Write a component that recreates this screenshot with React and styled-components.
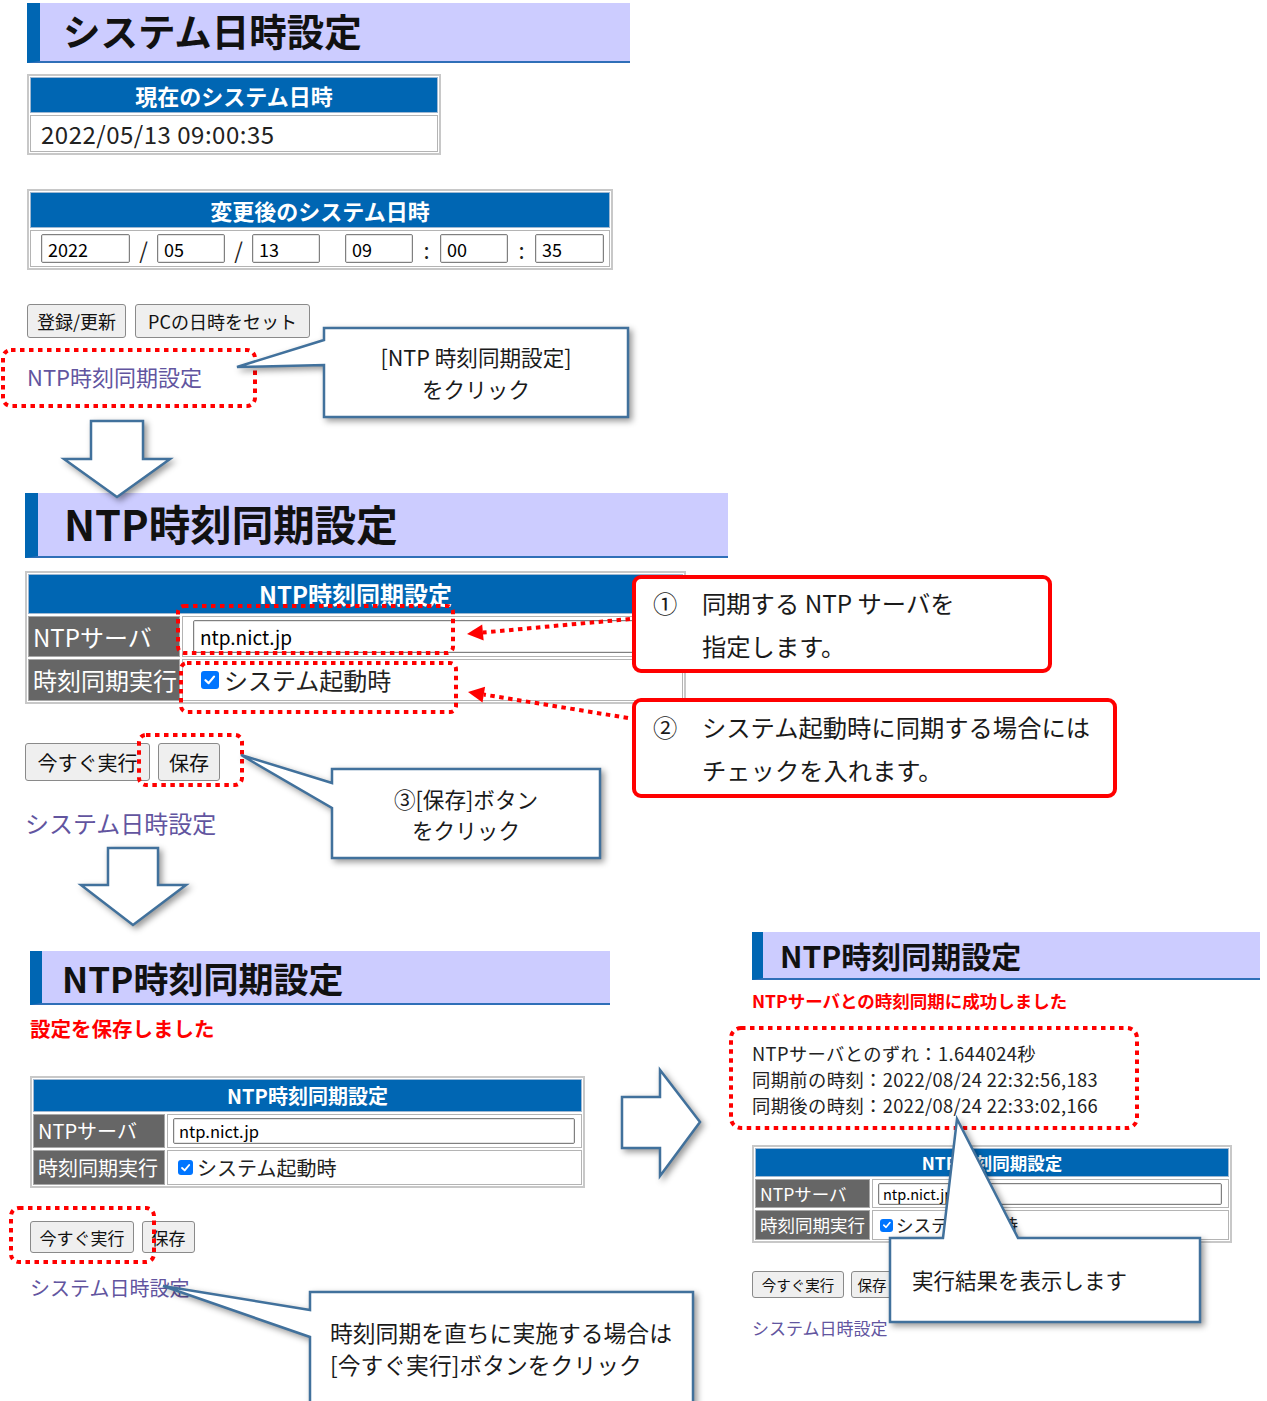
import React from 'react';
import styled, { createGlobalStyle } from 'styled-components';

const FONT = `"Noto Sans CJK JP", "Noto Sans", sans-serif`;
const BLUE = '#0066b3';
const LINE = '#41719c';
const LINK = '#62559f';
const RED = '#ff0000';

const GlobalStyle = createGlobalStyle`
  *, *::before, *::after { box-sizing: border-box; }
  html, body { margin: 0; padding: 0; background: #fff; }
  body { font-family: ${FONT}; }
`;

const Canvas = styled.div`
  position: relative;
  width: 1267px;
  height: 1401px;
  overflow: hidden;
  background: #fff;
  font-family: ${FONT};
  color: #000;
`;

// 貼り付けたスクリーンショット1枚分
const Shot = styled.div`
  position: absolute;
  left: ${(p) => p.$x}px;
  top: ${(p) => p.$y}px;
  display: flex;
  flex-direction: column;
  align-items: flex-start;
`;

const TitleBar = styled.h1`
  margin: 0;
  width: ${(p) => p.$w}px;
  height: ${(p) => p.$h}px;
  display: flex;
  align-items: center;
  padding-left: ${(p) => p.$pad}px;
  padding-bottom: ${(p) => p.$lift || 0}px;
  background: #ccccff;
  border-left: ${(p) => p.$strip}px solid ${BLUE};
  border-bottom: 2px solid #2f6fb8;
  font-size: ${(p) => p.$fs}px;
  font-weight: 700;
  line-height: 1;
  color: #111;
  white-space: nowrap;
`;

const Message = styled.p`
  margin: ${(p) => p.$mt}px 0 0;
  font-size: ${(p) => p.$fs}px;
  line-height: ${(p) => p.$lh}px;
  font-weight: 700;
  color: ${RED};
  white-space: nowrap;
`;

const Results = styled.div`
  margin-top: ${(p) => p.$mt}px;
  font-size: ${(p) => p.$fs}px;
  line-height: ${(p) => p.$lh}px;
  letter-spacing: 0.4px;
  color: #222;
  white-space: nowrap;
`;

const Table = styled.div`
  width: ${(p) => p.$w}px;
  margin-top: ${(p) => p.$mt}px;
  display: grid;
  grid-template-columns: ${(p) => p.$cols};
  gap: 2px;
  padding: 1px;
  border: 2px solid #c8c8c8;
  background: #fff;
`;

const HeadCell = styled.div`
  grid-column: 1 / -1;
  height: ${(p) => p.$h}px;
  display: flex;
  align-items: center;
  justify-content: center;
  background: ${BLUE};
  border: 1px solid #9fb8d2;
  color: #fff;
  font-size: ${(p) => p.$fs}px;
  font-weight: 700;
  line-height: 1;
  white-space: nowrap;
`;

const LabelCell = styled.div`
  height: ${(p) => p.$h}px;
  display: flex;
  align-items: center;
  padding-left: 4px;
  background: #666666;
  border: 1px solid #a8a8a8;
  color: #fff;
  font-size: ${(p) => p.$fs}px;
  line-height: 1;
  white-space: nowrap;
  overflow: hidden;
`;

const ValueCell = styled.div`
  height: ${(p) => p.$h}px;
  display: flex;
  align-items: center;
  gap: ${(p) => p.$gap || 0}px;
  padding: 0 ${(p) => p.$right || 6}px 0 ${(p) => p.$pad}px;
  border: 1px solid #b4b4b4;
  font-size: ${(p) => p.$fs}px;
  letter-spacing: ${(p) => p.$ls || 0}px;
  line-height: 1;
  color: #222;
  white-space: nowrap;
  overflow: hidden;
`;

const TextInput = styled.input`
  flex: ${(p) => (p.$w ? 'none' : '1')};
  width: ${(p) => (p.$w ? `${p.$w}px` : 'auto')};
  min-width: 0;
  height: ${(p) => p.$h}px;
  padding: 0 ${(p) => p.$px || 5}px;
  border: 1px solid #808080;
  border-radius: 2px;
  box-shadow: inset 0 0 0 1px #e4e4e4;
  background: #fff;
  font-family: ${FONT};
  font-size: ${(p) => p.$fs}px;
  letter-spacing: 0;
  color: #000;
  outline: none;
`;

const Sep = styled.span`
  width: ${(p) => p.$w}px;
  flex: none;
  text-align: center;
  font-size: 22px;
  color: #222;
`;

const Check = styled.span`
  flex: none;
  width: ${(p) => p.$s}px;
  height: ${(p) => p.$s}px;
  border-radius: 3px;
  background: #0075ff;
  display: flex;
  align-items: center;
  justify-content: center;
  margin-left: ${(p) => p.$ml || 0}px;
`;

const ButtonRow = styled.div`
  margin-top: ${(p) => p.$mt}px;
  display: flex;
  gap: ${(p) => p.$gap}px;
`;

const Button = styled.button`
  width: ${(p) => p.$w}px;
  height: ${(p) => p.$h}px;
  padding: 0;
  border: 1px solid #8a8a8a;
  border-radius: 3px;
  background: #efefef;
  font-family: ${FONT};
  font-size: ${(p) => p.$fs}px;
  color: #111;
  white-space: nowrap;
`;

const PageLink = styled.a`
  margin-top: ${(p) => p.$mt}px;
  font-size: ${(p) => p.$fs}px;
  line-height: ${(p) => p.$lh}px;
  color: ${LINK};
  text-decoration: none;
  white-space: nowrap;
`;

// 注釈レイヤー（図形）
const Drawing = styled.svg`
  position: absolute;
  left: 0;
  top: 0;
  width: 1267px;
  height: 1401px;
  overflow: visible;
  pointer-events: none;
  filter: ${(p) => (p.$shadow ? 'drop-shadow(3px 3px 3px rgba(0,0,0,0.4))' : 'none')};
`;

const DotRect = styled.rect`
  fill: none;
  stroke: ${RED};
  stroke-width: 4px;
  stroke-dasharray: 4.5 4.5;
`;

const DotLine = styled.line`
  stroke: ${RED};
  stroke-width: 4px;
  stroke-dasharray: 4.5 4.5;
`;

const Outline = styled.path`
  fill: #fff;
  stroke: ${LINE};
  stroke-width: 2.5px;
  stroke-linejoin: miter;
`;

const CalloutBody = styled.div`
  position: absolute;
  left: ${(p) => p.$x}px;
  top: ${(p) => p.$y}px;
  width: ${(p) => p.$w}px;
  height: ${(p) => p.$h}px;
  display: flex;
  flex-direction: column;
  justify-content: ${(p) => (p.$top ? 'flex-start' : 'center')};
  align-items: ${(p) => (p.$left ? 'flex-start' : 'center')};
  padding: ${(p) => p.$pt || 0}px 0 0 ${(p) => p.$pl || 0}px;
  font-size: ${(p) => p.$fs}px;
  line-height: ${(p) => p.$lh}px;
  color: #1a1a1a;
  white-space: nowrap;
`;

const Note = styled.div`
  position: absolute;
  left: ${(p) => p.$x}px;
  top: ${(p) => p.$y}px;
  width: ${(p) => p.$w}px;
  height: ${(p) => p.$h}px;
  display: grid;
  grid-template-columns: 49px 1fr;
  align-content: start;
  padding: ${(p) => p.$pt}px 0 0 17px;
  border: 4px solid ${RED};
  border-radius: 9px;
  background: #fff;
  font-size: 24.3px;
  line-height: 43px;
  color: #1a1a1a;
  white-space: nowrap;
`;

const Line = styled.span`
  display: block;
`;

function CheckMark({ s }) {
  return (
    <svg width={s * 0.75} height={s * 0.75} viewBox="0 0 12 12">
      <path d="M2.2 6.4 L5 9 L9.8 3.2" fill="none" stroke="#fff" strokeWidth="2" strokeLinecap="round" strokeLinejoin="round" />
    </svg>
  );
}

function RedArrow({ from, to }) {
  const [x1, y1] = from;
  const [x2, y2] = to;
  const len = Math.hypot(x2 - x1, y2 - y1);
  const ux = (x2 - x1) / len;
  const uy = (y2 - y1) / len;
  const bx = x2 - ux * 16;
  const by = y2 - uy * 16;
  const px = -uy;
  const py = ux;
  return (
    <>
      <DotLine x1={x1} y1={y1} x2={bx} y2={by} />
      <polygon points={`${x2},${y2} ${bx + px * 8},${by + py * 8} ${bx - px * 8},${by - py * 8}`} fill={RED} />
    </>
  );
}

function Callout({ d, box, fs, lh, left, top, pl, pt, children }) {
  const [x, y, w, h] = box;
  return (
    <>
      <Drawing $shadow>
        <Outline d={d} />
      </Drawing>
      <CalloutBody $x={x} $y={y} $w={w} $h={h} $fs={fs} $lh={lh} $left={left} $top={top} $pl={pl} $pt={pt}>
        {children}
      </CalloutBody>
    </>
  );
}

function NtpTable({ z }) {
  return (
    <Table $w={z.w} $mt={z.mt} $cols={`${z.label}px 1fr`}>
      <HeadCell $h={z.head} $fs={z.headFs}>NTP時刻同期設定</HeadCell>
      <LabelCell $h={z.row1} $fs={z.fs}>NTPサーバ</LabelCell>
      <ValueCell $h={z.row1} $pad={z.pad} $fs={z.inputFs}>
        <TextInput $h={z.input} $fs={z.inputFs} $px={z.inputPx} defaultValue="ntp.nict.jp" />
      </ValueCell>
      <LabelCell $h={z.row2} $fs={z.fs}>時刻同期実行</LabelCell>
      <ValueCell $h={z.row2} $pad={z.pad} $gap={z.checkGap} $fs={z.fs}>
        <Check $s={z.check} $ml={z.checkMl}>
          <CheckMark s={z.check} />
        </Check>
        システム起動時
      </ValueCell>
    </Table>
  );
}

const ntp2 = { w: 661, mt: 13, label: 152, head: 40, headFs: 24, row1: 41, row2: 42, fs: 24, pad: 10, input: 33, inputFs: 19, inputPx: 6, check: 18, checkMl: 8, checkGap: 5 };
const ntp3 = { w: 555, mt: 34, label: 132, head: 33, headFs: 20, row1: 34, row2: 35, fs: 20, pad: 5, input: 26, inputFs: 16.5, inputPx: 5, check: 15, checkMl: 5, checkGap: 4 };
const ntp4 = { w: 480, mt: 27, label: 115, head: 29, headFs: 17.5, row1: 29, row2: 30, fs: 17.5, pad: 5, input: 22, inputFs: 14.5, inputPx: 4, check: 13, checkMl: 2, checkGap: 3 };

export default function App() {
  return (
    <>
      <GlobalStyle />
      <Canvas>
        {/* システム日時設定 */}
        <Shot $x={27} $y={3}>
          <TitleBar $w={603} $h={60} $strip={13} $pad={23} $fs={37.5} $lift={5}>システム日時設定</TitleBar>
          <Table $w={414} $mt={11} $cols="1fr">
            <HeadCell $h={36} $fs={22}>現在のシステム日時</HeadCell>
            <ValueCell $h={37} $pad={10} $fs={24} $ls={0.5}>2022/05/13 09:00:35</ValueCell>
          </Table>
          <Table $w={586} $mt={34} $cols="1fr">
            <HeadCell $h={36} $fs={22}>変更後のシステム日時</HeadCell>
            <ValueCell $h={37} $pad={10}>
              <TextInput $w={89} $h={29} $fs={18} $px={6} defaultValue="2022" />
              <Sep $w={27}>/</Sep>
              <TextInput $w={68} $h={29} $fs={18} $px={6} defaultValue="05" />
              <Sep $w={27}>/</Sep>
              <TextInput $w={68} $h={29} $fs={18} $px={6} defaultValue="13" />
              <Sep $w={25} />
              <TextInput $w={68} $h={29} $fs={18} $px={6} defaultValue="09" />
              <Sep $w={27}>:</Sep>
              <TextInput $w={68} $h={29} $fs={18} $px={6} defaultValue="00" />
              <Sep $w={27}>:</Sep>
              <TextInput $w={69} $h={29} $fs={18} $px={6} defaultValue="35" />
            </ValueCell>
          </Table>
          <ButtonRow $mt={34} $gap={9}>
            <Button $w={99} $h={34} $fs={18}>登録/更新</Button>
            <Button $w={175} $h={34} $fs={18}>PCの日時をセット</Button>
          </ButtonRow>
          <PageLink $mt={23} $fs={22} $lh={30}>NTP時刻同期設定</PageLink>
        </Shot>

        {/* NTP時刻同期設定 */}
        <Shot $x={25} $y={493}>
          <TitleBar $w={703} $h={65} $strip={13} $pad={26} $fs={41.5} $lift={2}>NTP時刻同期設定</TitleBar>
          <NtpTable z={ntp2} />
          <ButtonRow $mt={39} $gap={8}>
            <Button $w={125} $h={38} $fs={20}>今すぐ実行</Button>
            <Button $w={62} $h={38} $fs={20}>保存</Button>
          </ButtonRow>
          <PageLink $mt={26} $fs={24} $lh={32}>システム日時設定</PageLink>
        </Shot>

        {/* 保存後 */}
        <Shot $x={30} $y={951}>
          <TitleBar $w={580} $h={54} $strip={12} $pad={20} $fs={35}>NTP時刻同期設定</TitleBar>
          <Message $mt={9} $fs={20.5} $lh={28}>設定を保存しました</Message>
          <NtpTable z={ntp3} />
          <ButtonRow $mt={33} $gap={8}>
            <Button $w={104} $h={32} $fs={17}>今すぐ実行</Button>
            <Button $w={53} $h={32} $fs={17}>保存</Button>
          </ButtonRow>
          <PageLink $mt={21} $fs={20} $lh={28}>システム日時設定</PageLink>
        </Shot>

        {/* 実行結果 */}
        <Shot $x={752} $y={932}>
          <TitleBar $w={508} $h={48} $strip={11} $pad={17} $fs={30}>NTP時刻同期設定</TitleBar>
          <Message $mt={9} $fs={17.5} $lh={24}>NTPサーバとの時刻同期に成功しました</Message>
          <Results $mt={27} $fs={18.3} $lh={26}>
            <Line>NTPサーバとのずれ：1.644024秒</Line>
            <Line>同期前の時刻：2022/08/24 22:32:56,183</Line>
            <Line>同期後の時刻：2022/08/24 22:33:02,166</Line>
          </Results>
          <NtpTable z={ntp4} />
          <ButtonRow $mt={28} $gap={7}>
            <Button $w={92} $h={27} $fs={14.5}>今すぐ実行</Button>
            <Button $w={42} $h={27} $fs={14.5}>保存</Button>
          </ButtonRow>
          <PageLink $mt={18} $fs={17} $lh={24}>システム日時設定</PageLink>
        </Shot>

        {/* 矢印 */}
        <Drawing $shadow>
          <Outline d="M91,421 H143 V459 H170 L117,497 L64,459 H91 Z" />
          <Outline d="M108,848 H158 V885 H186 L133,925 L81,885 H108 Z" />
          <Outline d="M622,1097 H660 V1070 L700,1122 L660,1176 V1148 H622 Z" />
        </Drawing>

        {/* 赤点線の囲み */}
        <Drawing>
          <DotRect x={3} y={350} width={252} height={56} rx={8} />
          <DotRect x={178} y={606} width={275} height={47} rx={6} />
          <DotRect x={181} y={663} width={275} height={49} rx={6} />
          <DotRect x={139} y={735} width={103} height={50} rx={7} />
          <DotRect x={11} y={1208} width={143} height={54} rx={8} />
          <DotRect x={731} y={1028} width={406} height={100} rx={10} />
          <RedArrow from={[630, 619]} to={[467, 634]} />
          <RedArrow from={[628, 718]} to={[468, 692]} />
        </Drawing>

        <Note $x={632} $y={575} $w={420} $h={98} $pt={2}>
          <span>①</span>
          <span>同期する NTP サーバを</span>
          <span />
          <span>指定します。</span>
        </Note>
        <Note $x={632} $y={698} $w={485} $h={100} $pt={3}>
          <span>②</span>
          <span>システム起動時に同期する場合には</span>
          <span />
          <span>チェックを入れます。</span>
        </Note>

        <Callout d="M324,328 H628 V417 H324 V365 L237,367 L324,340 Z" box={[324, 328, 304, 89]} fs={21.6} lh={32}>
          <Line>[NTP 時刻同期設定]</Line>
          <Line>をクリック</Line>
        </Callout>
        <Callout d="M332,769 H600 V858 H332 V808 L241,755 L332,783 Z" box={[332, 769, 268, 89]} fs={21.6} lh={31}>
          <Line>③[保存]ボタン</Line>
          <Line>をクリック</Line>
        </Callout>
        <Callout d="M310,1292 H693 V1430 H310 V1337 L163,1286 L310,1310 Z" box={[310, 1292, 383, 130]} fs={22.8} lh={32} left top pl={20} pt={25}>
          <Line>時刻同期を直ちに実施する場合は</Line>
          <Line>[今すぐ実行]ボタンをクリック</Line>
        </Callout>
        <Callout d="M890,1238 H943 L957,1119 L1018,1238 H1200 V1322 H890 Z" box={[890, 1238, 310, 84]} fs={21.5} lh={32} left pl={22}>
          <Line>実行結果を表示します</Line>
        </Callout>
      </Canvas>
    </>
  );
}
